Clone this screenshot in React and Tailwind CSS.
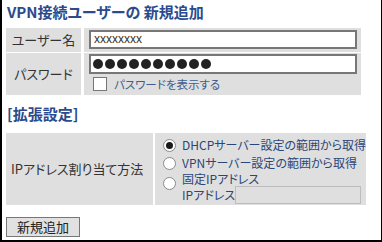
import { useState } from "react";

const font = "font-['Noto_Sans_CJK_JP','Noto_Sans',sans-serif] [font-feature-settings:'palt']";

function Radio({ checked }) {
  return (
    <span className="w-[13px] h-[13px] shrink-0 rounded-full border border-[#8a8a8a] bg-white flex items-center justify-center">
      {checked && <span className="w-[7px] h-[7px] rounded-full bg-[#1a1a1a]" />}
    </span>
  );
}

export default function App() {
  const [mode, setMode] = useState("dhcp");
  const [show, setShow] = useState(false);

  return (
    <div className={`w-[382px] h-[242px] bg-white border-l-2 border-r border-b-2 border-black pl-[4px] ${font}`}>
      <h1 className="pl-[1px] pt-[2px] h-[28px] text-[15px] leading-[20px] font-bold text-[#2a4b8d]">
        VPN接続ユーザーの 新規追加
      </h1>

      {/* basic settings */}
      <div className="w-[355px] grid grid-cols-[75px_1fr] gap-x-[3px] gap-y-[1px]">
        <div className="bg-[#dfdfdf] h-[24px] flex items-center justify-center text-[13px] text-[#333]">ユーザー名</div>
        <div className="bg-[#dfdfdf] h-[24px] pl-[5px] pt-[2px]">
          <div className="w-[268px] h-[19px] border-2 border-[#777] bg-white pl-[3px] text-[12px] leading-[15px] text-[#333] font-['Liberation_Sans',sans-serif]">
            xxxxxxxx
          </div>
        </div>
        <div className="bg-[#dfdfdf] h-[42px] flex items-center justify-center text-[13px] text-[#333]">パスワード</div>
        <div className="bg-[#dfdfdf] h-[42px] pl-[5px] pt-[1px]">
          <div className="w-[268px] h-[20px] border-2 border-[#777] bg-white pl-[2px] flex items-center gap-[2px]">
            {Array.from({ length: 10 }).map((_, i) => (
              <span key={i} className="w-[10px] h-[10px] rounded-full bg-[#222]" />
            ))}
          </div>
          <label className="flex items-center gap-[7px] mt-[3px] pl-[4px] text-[11.5px] leading-[14px] text-[#3d5d8e]">
            <span
              onClick={() => setShow(!show)}
              className="w-[14px] h-[14px] border border-[#777] bg-white flex items-center justify-center text-[10px]"
            >
              {show ? "✓" : ""}
            </span>
            パスワードを表示する
          </label>
        </div>
      </div>

      <h2 className="pl-[1px] pt-[9px] h-[38px] text-[15px] leading-[20px] font-bold text-[#2a4b8d]">[拡張設定]</h2>

      {/* extended settings */}
      <div className="w-[355px] grid grid-cols-[147px_1fr] gap-x-[2px]">
        <div className="bg-[#dfdfdf] flex items-center pl-[5px] text-[13px] text-[#333]">IPアドレス割り当て方法</div>
        <div className="bg-[#dfdfdf] pl-[8px] pt-[3px] pb-[1px] flex flex-col text-[12px] leading-[18px] text-[#2b4678] whitespace-nowrap">
          <div className="h-[18px] flex items-center gap-[6px]" onClick={() => setMode("dhcp")}>
            <Radio checked={mode === "dhcp"} />
            <span>DHCPサーバー設定の範囲から取得</span>
          </div>
          <div className="h-[18px] flex items-center gap-[6px]" onClick={() => setMode("vpn")}>
            <Radio checked={mode === "vpn"} />
            <span>VPNサーバー設定の範囲から取得</span>
          </div>
          <div className="flex gap-[6px]" onClick={() => setMode("fixed")}>
            <span className="mt-[5px]"><Radio checked={mode === "fixed"} /></span>
            <div className="flex flex-col">
              <span className="h-[14px] leading-[14px]">固定IPアドレス</span>
              <div className="h-[18px] flex items-center">
                <span>IPアドレス</span>
                <div className="w-[126px] h-[18px] border border-[#bdbdbd]" />
              </div>
            </div>
          </div>
        </div>
      </div>

      <button className="mt-[12px] w-[74px] h-[20px] bg-[#e1e1e1] border border-[#777] text-[13px] leading-[18px] text-[#222]">
        新規追加
      </button>
    </div>
  );
}
